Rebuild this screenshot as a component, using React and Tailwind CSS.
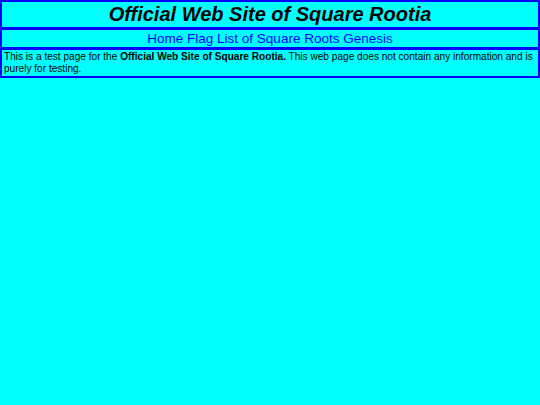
export default function App() {
  return (
    <div className="min-h-[405px] bg-[#00ffff] font-['Liberation_Sans',Arial,sans-serif]">
      <div className="flex flex-col gap-[3px] bg-[#0000ff] p-[2px]">
        <div className="bg-[#00ffff] py-[2px] text-center">
          <h1 className="text-[20px] font-bold italic leading-[21px] text-black">Official Web Site of Square Rootia</h1>
        </div>
        <div className="bg-[#00ffff] text-center text-[13.5px] leading-[17px] text-[#0000ff]">
          <a href="#">Home</a> <a href="#">Flag</a> <a href="#">List of Square Roots</a> <a href="#">Genesis</a>
        </div>
        <div className="bg-[#00ffff] px-[2px] py-[1px] text-[10.1px] leading-[12px] text-black">
          This is a test page for the <b>Official Web Site of Square Rootia.</b> This web page does not contain any information and is purely for testing.
        </div>
      </div>
    </div>
  )
}
